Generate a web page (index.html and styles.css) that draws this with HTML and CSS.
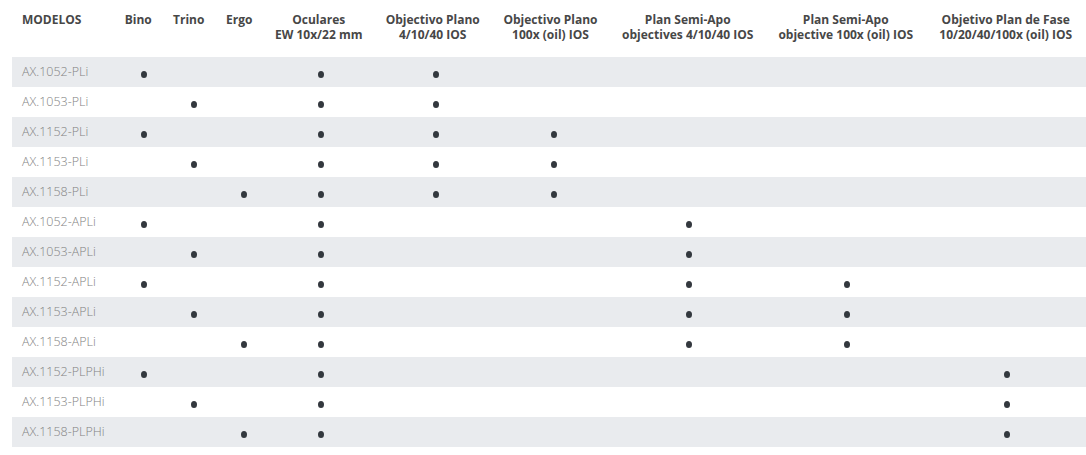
FILE: index.html
```html
<!DOCTYPE html>
<html lang="es">
<head>
<meta charset="utf-8">
<title>Modelos</title>
<link rel="stylesheet" href="styles.css">
</head>
<body>
<table class="models">
  <colgroup>
    <col class="c-model"><col class="c-bino"><col class="c-trino"><col class="c-ergo"><col class="c-ocu"><col class="c-op1"><col class="c-op2"><col class="c-sa1"><col class="c-sa2"><col class="c-fase">
  </colgroup>
  <thead>
    <tr>
      <th class="first">MODELOS</th>
      <th>Bino</th>
      <th>Trino</th>
      <th>Ergo</th>
      <th>Oculares<br>EW 10x/22 mm</th>
      <th>Objectivo Plano<br>4/10/40 IOS</th>
      <th>Objectivo Plano<br>100x (oil) IOS</th>
      <th>Plan Semi-Apo<br>objectives 4/10/40 IOS</th>
      <th>Plan Semi-Apo<br>objective 100x (oil) IOS</th>
      <th>Objetivo Plan de Fase<br>10/20/40/100x (oil) IOS</th>
    </tr>
  </thead>
  <tbody>
    <tr><td>AX.1052-PLi</td><td><i class="dot"></i></td><td></td><td></td><td><i class="dot"></i></td><td><i class="dot"></i></td><td></td><td></td><td></td><td></td></tr>
    <tr><td>AX.1053-PLi</td><td></td><td><i class="dot"></i></td><td></td><td><i class="dot"></i></td><td><i class="dot"></i></td><td></td><td></td><td></td><td></td></tr>
    <tr><td>AX.1152-PLi</td><td><i class="dot"></i></td><td></td><td></td><td><i class="dot"></i></td><td><i class="dot"></i></td><td><i class="dot"></i></td><td></td><td></td><td></td></tr>
    <tr><td>AX.1153-PLi</td><td></td><td><i class="dot"></i></td><td></td><td><i class="dot"></i></td><td><i class="dot"></i></td><td><i class="dot"></i></td><td></td><td></td><td></td></tr>
    <tr><td>AX.1158-PLi</td><td></td><td></td><td><i class="dot"></i></td><td><i class="dot"></i></td><td><i class="dot"></i></td><td><i class="dot"></i></td><td></td><td></td><td></td></tr>
    <tr><td>AX.1052-APLi</td><td><i class="dot"></i></td><td></td><td></td><td><i class="dot"></i></td><td></td><td></td><td><i class="dot"></i></td><td></td><td></td></tr>
    <tr><td>AX.1053-APLi</td><td></td><td><i class="dot"></i></td><td></td><td><i class="dot"></i></td><td></td><td></td><td><i class="dot"></i></td><td></td><td></td></tr>
    <tr><td>AX.1152-APLi</td><td><i class="dot"></i></td><td></td><td></td><td><i class="dot"></i></td><td></td><td></td><td><i class="dot"></i></td><td><i class="dot"></i></td><td></td></tr>
    <tr><td>AX.1153-APLi</td><td></td><td><i class="dot"></i></td><td></td><td><i class="dot"></i></td><td></td><td></td><td><i class="dot"></i></td><td><i class="dot"></i></td><td></td></tr>
    <tr><td>AX.1158-APLi</td><td></td><td></td><td><i class="dot"></i></td><td><i class="dot"></i></td><td></td><td></td><td><i class="dot"></i></td><td><i class="dot"></i></td><td></td></tr>
    <tr><td>AX.1152-PLPHi</td><td><i class="dot"></i></td><td></td><td></td><td><i class="dot"></i></td><td></td><td></td><td></td><td></td><td><i class="dot"></i></td></tr>
    <tr><td>AX.1153-PLPHi</td><td></td><td><i class="dot"></i></td><td></td><td><i class="dot"></i></td><td></td><td></td><td></td><td></td><td><i class="dot"></i></td></tr>
    <tr><td>AX.1158-PLPHi</td><td></td><td></td><td><i class="dot"></i></td><td><i class="dot"></i></td><td></td><td></td><td></td><td></td><td><i class="dot"></i></td></tr>
  </tbody>
</table>
</body>
</html>
```

FILE: styles.css
```css
html, body {
  margin: 0;
  padding: 0;
  background: #ffffff;
}
body {
  padding-left: 12px;
  font-family: "Open Sans", "Liberation Sans", sans-serif;
}
.models {
  border-collapse: collapse;
  table-layout: fixed;
  width: 1074px;
}
.c-model { width: 102px; }
.c-bino { width: 48.5px; }
.c-trino { width: 52.5px; }
.c-ergo { width: 48.5px; }
.c-ocu { width: 110.5px; }
.c-op1 { width: 117.5px; }
.c-op2 { width: 118px; }
.c-sa1 { width: 156.5px; }
.c-sa2 { width: 159.5px; }
.c-fase { width: 160.5px; }

.models th {
  height: 57px;
  box-sizing: border-box;
  padding: 12px 0 0 0;
  vertical-align: top;
  text-align: center;
  font-size: 12px;
  line-height: 15px;
  font-weight: 700;
  color: #474747;
  white-space: nowrap;
}
.models th.first {
  text-align: left;
  padding-left: 10px;
}
.models td {
  height: 30px;
  padding: 0;
  text-align: center;
  vertical-align: middle;
  font-size: 12.5px;
  line-height: 30px;
}
.models td:first-child {
  text-align: left;
  padding-left: 10px;
  font-weight: 300;
  color: #838383;
  white-space: nowrap;
}
.models tbody tr:nth-child(odd) td {
  background: #e9ebee;
}
.models td:nth-child(2) { padding-left: 12px; }
.models td:nth-child(3) { padding-left: 10px; }
.models td:nth-child(4) { padding-left: 10px; }
.models td:nth-child(5) { padding-left: 5px; }
.models td:nth-child(6) { padding-left: 6px; }
.models td:nth-child(7) { padding-left: 6px; }
.models td:nth-child(8) { padding-left: 2px; }
.models td:nth-child(9) { padding-left: 3px; }
.models td:nth-child(10) { padding-left: 2px; }
.dot {
  display: inline-block;
  width: 6px;
  height: 7px;
  border-radius: 50%;
  background: #33383e;
  vertical-align: -2px;
}
```
